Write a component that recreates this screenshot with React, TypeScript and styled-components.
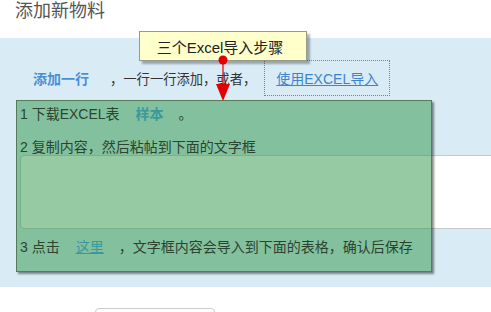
import React from 'react';
import styled, { createGlobalStyle } from 'styled-components';

const GlobalStyle = createGlobalStyle`
  html, body {
    margin: 0;
    padding: 0;
    background: #fff;
    overflow: hidden;
  }
  body {
    font-family: "Liberation Sans", "Noto Sans CJK SC", sans-serif;
    color: #333;
  }
`;

const Page = styled.div`
  position: relative;
  width: 491px;
  height: 312px;
  overflow: hidden;
`;

const Title = styled.h3`
  margin: 0;
  height: 38px;
  padding: 0 0 0 15px;
  font-size: 18px;
  font-weight: normal;
  line-height: 22px;
  color: #555;
`;

const Panel = styled.div`
  background: #d9ebf5;
  height: 249px;
  padding-top: 22px;
  box-sizing: border-box;
`;

const ActionRow = styled.div`
  display: flex;
  align-items: center;
  height: 36px;
  padding-left: 33px;
  font-size: 13.3px;
  color: #333;
`;

const AddLink = styled.a`
  font-size: 14px;
  font-weight: bold;
  color: #4a8fd6;
  margin-right: 21px;
  cursor: pointer;
`;

const ImportButton = styled.a`
  display: flex;
  align-items: center;
  height: 36px;
  box-sizing: border-box;
  margin-left: 8px;
  padding: 0 11px;
  border: 1px dotted #4a8fd6;
  font-size: 14px;
  color: #3d84d0;
  text-decoration: underline;
  cursor: pointer;
`;

const PasteArea = styled.div`
  margin: 59px 0 0 20px;
  width: 500px;
  height: 74px;
  box-sizing: border-box;
  background: #fff;
  border: 1px solid #c8c8c8;
  border-radius: 4px;
`;

const Footer = styled.div`
  padding: 21px 0 0 95px;
`;

const SaveButton = styled.button`
  width: 120px;
  height: 30px;
  background: #fff;
  border: 1px solid #ccc;
  border-radius: 4px;
`;

const Guide = styled.div`
  position: absolute;
  left: 16px;
  top: 100px;
  width: 416px;
  height: 172px;
  box-sizing: border-box;
  background: rgba(46, 150, 70, 0.5);
  border: 1px solid rgba(70, 100, 70, 0.75);
  box-shadow: 2px 2px 2px rgba(0, 0, 0, 0.45);
  padding: 4px 0 0 3px;
  font-size: 14px;
  color: #2b4430;
`;

const GuideLine = styled.div<{ $gap?: number }>`
  display: flex;
  align-items: center;
  height: 16px;
  margin-top: ${(p) => p.$gap ?? 0}px;
  white-space: nowrap;
`;

const GuideLink = styled.a<{ $underline?: boolean }>`
  color: #3a999b;
  font-weight: ${(p) => (p.$underline ? 'normal' : 'bold')};
  text-decoration: ${(p) => (p.$underline ? 'underline' : 'none')};
  margin: 0 15px 0 16px;
`;

const Callout = styled.div`
  position: absolute;
  left: 139px;
  top: 31px;
  width: 168px;
  height: 30px;
  box-sizing: border-box;
  padding-right: 6px;
  background: #ffffcc;
  border: 1px solid #9a9a8a;
  box-shadow: 3px 3px 2px rgba(0, 0, 0, 0.3);
  display: flex;
  align-items: center;
  justify-content: center;
  font-size: 15px;
  color: #222;
`;

const Pointer = styled.svg`
  position: absolute;
  left: 214px;
  top: 54px;
`;

export default function App() {
  return (
    <Page>
      <GlobalStyle />
      <Title>添加新物料</Title>
      <Panel>
        <ActionRow>
          <AddLink>添加一行</AddLink>
          <span>，一行一行添加，或者，</span>
          <ImportButton>使用EXCEL导入</ImportButton>
        </ActionRow>
        <PasteArea />
      </Panel>
      <Footer>
        <SaveButton />
      </Footer>

      <Guide>
        <GuideLine>
          1 下载EXCEL表<GuideLink>样本</GuideLink>。
        </GuideLine>
        <GuideLine $gap={17}>2 复制内容，然后粘帖到下面的文字框</GuideLine>
        <GuideLine $gap={84}>
          3 点击<GuideLink $underline>这里</GuideLink>，文字框内容会导入到下面的表格，确认后保存
        </GuideLine>
      </Guide>

      <Callout>三个Excel导入步骤</Callout>
      <Pointer width="18" height="48" viewBox="0 0 18 48">
        <line x1="9" y1="6" x2="9" y2="32" stroke="#e00000" strokeWidth="1.2" />
        <circle cx="9" cy="6" r="4.5" fill="#e00000" />
        <polygon points="2,30 16,30 9,47" fill="#e00000" />
      </Pointer>
    </Page>
  );
}
